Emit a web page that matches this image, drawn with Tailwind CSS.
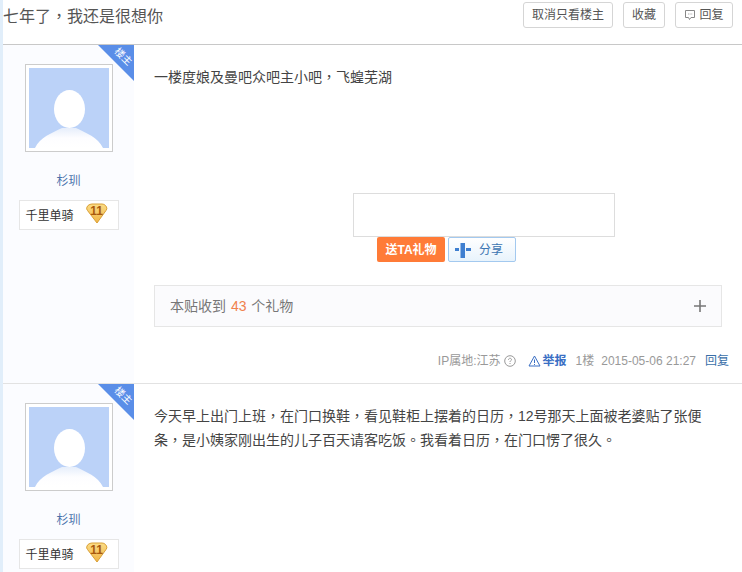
<!DOCTYPE html>
<html lang="zh-CN">
<head>
<meta charset="utf-8">
<script src="https://cdn.jsdelivr.net/npm/@tailwindcss/browser@4"></script>
</head>
<body class="w-[742px] h-[572px] overflow-hidden bg-white font-['Liberation_Sans','Noto_Sans_CJK_SC',sans-serif] text-[#333]">
<div class="border-l-[3px] border-[#e1eefa] h-[572px] overflow-hidden">
  <header class="h-[45px] border-b border-[#c8c8c8] flex items-start justify-between pr-[9px]">
    <h1 lang="zh-TW" class="text-base leading-[33px] text-[#555] font-normal font-['Liberation_Sans','Noto_Sans_CJK_TC',sans-serif]">七年了，我还是很想你</h1>
    <div class="flex gap-[10px] pt-[2px] text-xs text-[#555]">
      <a class="h-[26px] w-[90px] flex items-center justify-center border border-[#d5d5d5] rounded-[3px] bg-white">取消只看楼主</a>
      <a class="h-[26px] w-[42px] flex items-center justify-center border border-[#d5d5d5] rounded-[3px] bg-white">收藏</a>
      <a class="h-[26px] w-[58px] flex items-center justify-center gap-[3px] border border-[#d5d5d5] rounded-[3px] bg-white">
        <svg width="12" height="12" viewBox="0 0 12 12" fill="none" stroke="#888"><path d="M1.500 1.500h9v7H7l-1.500 2-1-2h-3z"/><path d="M4 5h.8M5.700 5h.8M7.400 5h.8" stroke="#999"/></svg>
        回复
      </a>
    </div>
  </header>

  <article class="flex h-[339px] border-b border-[#e2e2e2]">
    <aside class="relative w-[131px] shrink-0 bg-[#fbfcff] flex flex-col items-center pt-[19px]">
      <div class="absolute top-0 right-0 w-0 h-0 border-t-[36px] border-l-[36px] border-t-[#5a8ee8] border-l-transparent"></div>
      <span class="absolute top-[5px] right-[1px] rotate-45 text-[10px] leading-[14px] text-white">楼主</span>
      <div class="w-[88px] h-[88px] border border-[#ccc] p-[3px] bg-white">
        <svg width="80" height="80" viewBox="0 0 80 80"><defs><linearGradient id="a" x1="0" y1="0" x2="0" y2="1"><stop offset="0" stop-color="#e6eefb"/><stop offset=".5" stop-color="#fdfdff"/><stop offset="1" stop-color="#fff"/></linearGradient></defs><rect width="80" height="80" fill="#bbd2f8"/><path d="M6 80c5-11 17-15 27-20h14c10 5 22 9 27 20z" fill="url(#a)"/><ellipse cx="40.500" cy="41" rx="15.500" ry="19" fill="#fff"/></svg>
      </div>
      <a class="mt-[20px] text-xs leading-[18px] text-[#4a72ac]">杉玔</a>
      <div class="mt-[10px] w-[100px] h-[30px] border border-[#e6e6e6] bg-white flex items-center justify-between pl-[6px] pr-[10px] pt-[1px] text-xs text-[#333]">
        <span>千里单骑</span>
        <span class="relative w-[22px] h-[21px] -mt-[4px]">
          <svg width="22" height="21" viewBox="0 0 22 21"><defs><linearGradient id="b" x1="0" y1="0" x2="0" y2="1"><stop offset="0" stop-color="#fbdc85"/><stop offset="1" stop-color="#f0b445"/></linearGradient></defs><path d="M6 1h10q2 0 3.500 1.500l1 1.500q1 2-.5 3.500L11 20 1.500 7.500Q0 6 1 4l1-1.500Q4 1 6 1z" fill="url(#b)" stroke="#d9a036"/></svg>
          <span class="absolute inset-0 text-center text-xs leading-[17px] font-bold text-[#a8590d]">11</span>
        </span>
      </div>
    </aside>
    <div class="flex-1 flex flex-col pl-[20px] pr-[20px]">
      <p lang="zh-TW" class="pt-[22px] text-sm leading-[20px] h-[148px] text-[#444] font-['Liberation_Sans','Noto_Sans_CJK_TC',sans-serif]">一楼度娘及曼吧众吧主小吧，飞蝗芜湖</p>
      <div class="ml-[199px] w-[262px] h-[44px] border border-[#ddd] bg-white"></div>
      <div class="flex ml-[223px] gap-[3px]">
        <a class="w-[68px] h-[25px] rounded-[2px] bg-[#ff7b37] text-white text-xs font-bold flex items-center justify-center">送TA礼物</a>
        <a class="w-[68px] h-[25px] rounded-[2px] border border-[#a3c9ef] bg-gradient-to-b from-white to-[#e8f3fc] text-[#3d75b2] text-xs flex items-center pl-[6px] gap-[8px]">
          <svg width="16" height="16" viewBox="0 0 16 16"><rect x="5.500" y="1" width="4.500" height="15" fill="#3f7fd0"/><rect x="0" y="6" width="4" height="3" fill="#3f7fd0"/><rect x="11" y="6" width="5" height="3" fill="#3f7fd0"/></svg>
          分享
        </a>
      </div>
      <div class="mt-[23px] w-[568px] h-[42px] border border-[#e6e6e6] bg-[#fbfbfd] flex items-center justify-between pl-[15px] pr-[14px] text-sm text-[#777]">
        <span>本贴收到 <span class="text-[#f0814d] mx-[1px]">43</span> 个礼物</span>
        <svg width="14" height="14" viewBox="0 0 14 14" stroke="#777" stroke-width="1.600"><path d="M1 7h12M7 1v12"/></svg>
      </div>
      <div class="mt-[25px] w-[575px] flex items-center justify-end text-xs leading-[18px] text-[#999]">
        <span>IP属地:江苏</span>
        <svg class="ml-[3px]" width="12" height="12" viewBox="0 0 12 12" fill="none" stroke="#999"><circle cx="6" cy="6" r="5.300"/><path d="M4.500 4.800c0-2 3-2 3-.2 0 1-1.500 1-1.500 2.400M6 8v1"/></svg>
        <svg class="ml-[12px]" width="13" height="12" viewBox="0 0 13 12" fill="none" stroke="#3a6fc4"><path d="M6.500 1L12 11H1zM6.500 4.500v3.500M6.500 9v1"/></svg>
        <a class="ml-[2px] font-bold text-[#3a6fc4]">举报</a>
        <span class="ml-[9px]">1楼</span>
        <span class="ml-[7px]">2015-05-06 21:27</span>
        <a class="ml-[9px] text-[#3a6fa8]">回复</a>
      </div>
    </div>
  </article>

  <article class="flex h-[188px]">
    <aside class="relative w-[131px] shrink-0 bg-[#fbfcff] flex flex-col items-center pt-[19px]">
      <div class="absolute top-0 right-0 w-0 h-0 border-t-[36px] border-l-[36px] border-t-[#5a8ee8] border-l-transparent"></div>
      <span class="absolute top-[5px] right-[1px] rotate-45 text-[10px] leading-[14px] text-white">楼主</span>
      <div class="w-[88px] h-[88px] border border-[#ccc] p-[3px] bg-white">
        <svg width="80" height="80" viewBox="0 0 80 80"><rect width="80" height="80" fill="#bbd2f8"/><path d="M6 80c5-11 17-15 27-20h14c10 5 22 9 27 20z" fill="url(#a)"/><ellipse cx="40.500" cy="41" rx="15.500" ry="19" fill="#fff"/></svg>
      </div>
      <a class="mt-[20px] text-xs leading-[18px] text-[#4a72ac]">杉玔</a>
      <div class="mt-[10px] w-[100px] h-[30px] border border-[#e6e6e6] bg-white flex items-center justify-between pl-[6px] pr-[10px] pt-[1px] text-xs text-[#333]">
        <span>千里单骑</span>
        <span class="relative w-[22px] h-[21px] -mt-[4px]">
          <svg width="22" height="21" viewBox="0 0 22 21"><path d="M6 1h10q2 0 3.500 1.500l1 1.500q1 2-.5 3.500L11 20 1.500 7.500Q0 6 1 4l1-1.500Q4 1 6 1z" fill="url(#b)" stroke="#d9a036"/></svg>
          <span class="absolute inset-0 text-center text-xs leading-[17px] font-bold text-[#a8590d]">11</span>
        </span>
      </div>
    </aside>
    <div class="flex-1 pl-[20px] pr-[20px]">
      <p lang="zh-TW" class="pt-[20px] text-sm leading-[24px] w-[558px] text-[#444] font-['Liberation_Sans','Noto_Sans_CJK_TC',sans-serif]">今天早上出门上班，在门口换鞋，看见鞋柜上摆着的日历，12号那天上面被老婆贴了张便条，是小姨家刚出生的儿子百天请客吃饭。我看着日历，在门口愣了很久。</p>
    </div>
  </article>
</div>
</body>
</html>
